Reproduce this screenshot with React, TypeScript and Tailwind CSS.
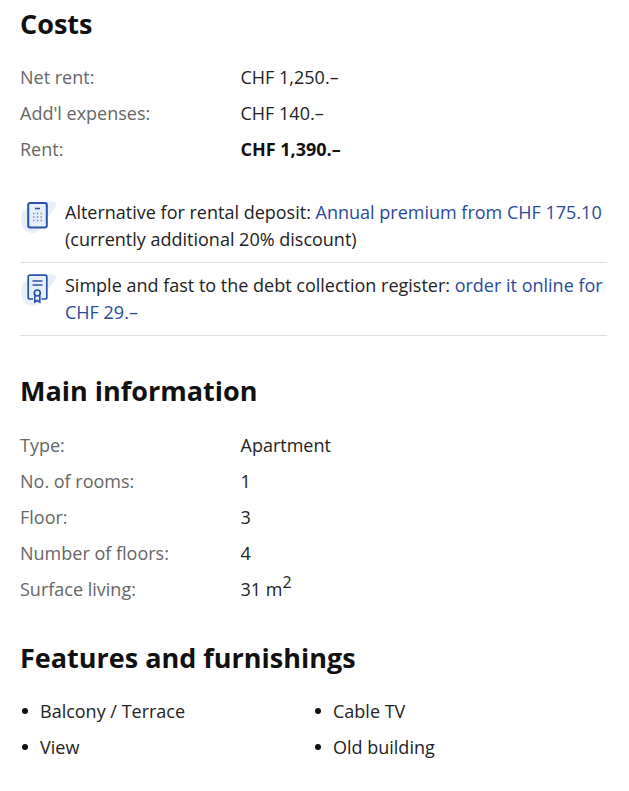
const font = { fontFamily: '"Open Sans", sans-serif' };

function Row({ label, children, bold }: { label: string; children: React.ReactNode; bold?: boolean }) {
  return (
    <div className="flex h-9 items-center">
      <div className="w-[220.5px] text-[#666666]">{label}</div>
      <div className={bold ? "font-bold text-[#111111]" : "text-[#222222]"}>{children}</div>
    </div>
  );
}

const blob = "M1 20C1 13 6 8 12 5C20 2 34 1 36 4C37 8 30 14 27 20C24 27 20 34 13 34C6 34 1 28 1 20Z";

function CalcIcon() {
  return (
    <svg width="30" height="36" viewBox="0 0 30 36" fill="none" className="shrink-0 overflow-visible">
      <path d={blob} fill="#e8effc" />
      <rect x="8.2" y="4" width="18.6" height="24.4" rx="2" stroke="#2a52a8" strokeWidth="2" />
      <path d="M15 9.5H20" stroke="#2a52a8" strokeWidth="1.6" />
      <path d="M13 14.5H14.5M16.8 14.5H18.3M20.5 14.5H22M13 18H14.5M16.8 18H18.3M20.5 18H22M13 21.5H14.5M16.8 21.5H18.3M20.5 21.5H22" stroke="#6f8cca" strokeWidth="1.6" />
    </svg>
  );
}

function CertIcon() {
  return (
    <svg width="30" height="36" viewBox="0 0 30 36" fill="none" className="shrink-0 overflow-visible">
      <path d={blob} fill="#e8effc" />
      <path d="M13 27H10C9 27 8.2 26.2 8.2 25.2V5C8.2 4 9 3.2 10 3.2H25C26 3.2 26.8 4 26.8 5V25.2C26.8 26.2 26 27 25 27H21.5" stroke="#2a52a8" strokeWidth="1.7" />
      <path d="M12.5 9H22.5M12.5 13H22.5" stroke="#2a52a8" strokeWidth="1.7" />
      <circle cx="17.3" cy="21" r="3" stroke="#2a52a8" strokeWidth="1.7" />
      <path d="M14.8 24V30L17.3 28.5L19.8 30V24" stroke="#2a52a8" strokeWidth="1.6" />
    </svg>
  );
}

function Bullet({ children }: { children: React.ReactNode }) {
  return (
    <li className="flex h-9 items-center">
      <span className="mr-[12px] ml-[2px] h-[6px] w-[6px] rounded-full bg-[#111111]" />
      {children}
    </li>
  );
}

export default function App() {
  return (
    <div style={font} className="w-[629px] bg-white px-5 pt-[4px] text-[18px] text-[#222222]">
      <h2 className="text-[27px] leading-[40px] font-bold text-[#111111]">Costs</h2>
      <div className="mt-[15px]">
        <Row label="Net rent:">CHF 1,250.–</Row>
        <Row label="Add'l expenses:">CHF 140.–</Row>
        <Row label="Rent:" bold>CHF 1,390.–</Row>
      </div>
      <div className="mt-[32px] w-[587px]">
        <div className="flex gap-[15px] border-b border-[#dedede] pb-[9px] leading-[27px]">
          <CalcIcon />
          <p>Alternative for rental deposit: <span className="text-[#2a4a9c]">Annual premium from CHF 175.10</span> (currently additional 20% discount)</p>
        </div>
        <div className="flex gap-[15px] border-b border-[#dedede] pt-[9px] pb-[9px] leading-[27px]">
          <CertIcon />
          <p>Simple and fast to the debt collection register: <span className="text-[#2a4a9c]">order it online for CHF 29.–</span></p>
        </div>
      </div>
      <h2 className="mt-[35px] text-[27px] leading-[40px] font-bold text-[#111111]">Main information</h2>
      <div className="mt-[16px]">
        <Row label="Type:">Apartment</Row>
        <Row label="No. of rooms:">1</Row>
        <Row label="Floor:">3</Row>
        <Row label="Number of floors:">4</Row>
        <Row label="Surface living:">
          <span>31 m<sup className="text-[16px]">2</sup></span>
        </Row>
      </div>
      <h2 className="mt-[31px] text-[27px] leading-[40px] font-bold text-[#111111]">Features and furnishings</h2>
      <ul className="mt-[15px] grid grid-cols-[293px_1fr]">
        <Bullet>Balcony / Terrace</Bullet>
        <Bullet>Cable TV</Bullet>
        <Bullet>View</Bullet>
        <Bullet>Old building</Bullet>
      </ul>
    </div>
  );
}
